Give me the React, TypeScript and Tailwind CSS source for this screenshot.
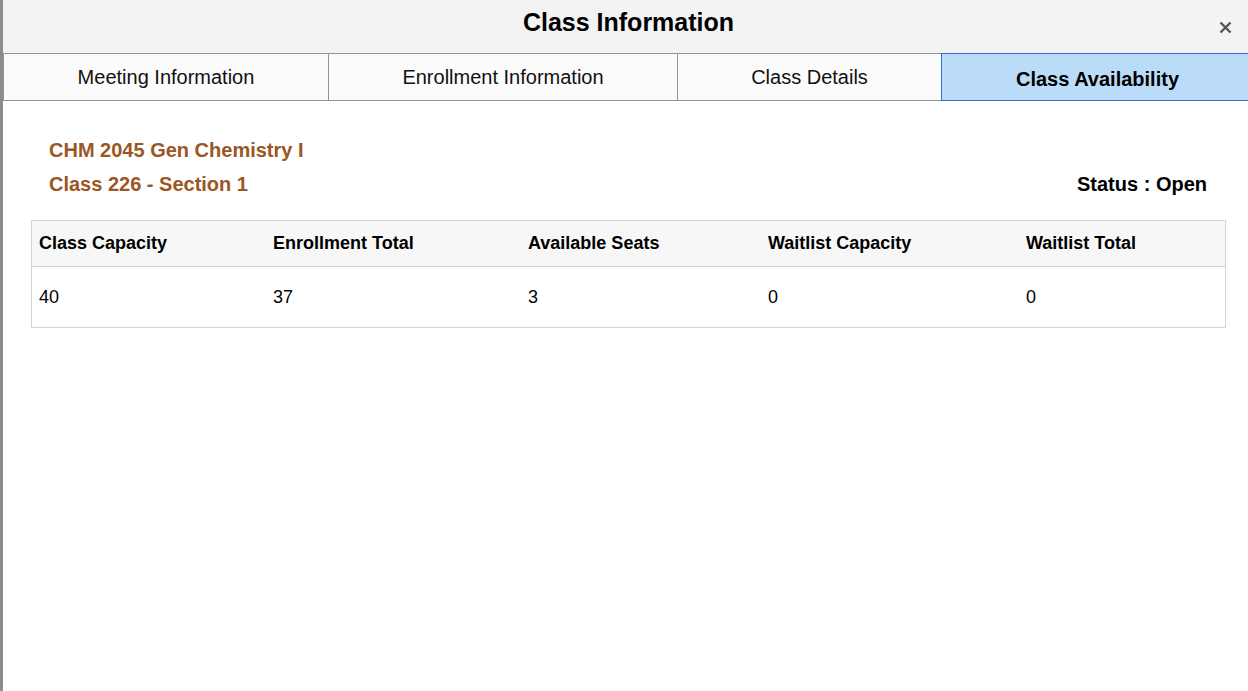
import React from "react";

const tabs = [
  { label: "Meeting Information", w: "w-[325px]" },
  { label: "Enrollment Information", w: "w-[349px]" },
  { label: "Class Details", w: "w-[264px]" },
];

const cols = [
  { h: "Class Capacity", v: "40" },
  { h: "Enrollment Total", v: "37" },
  { h: "Available Seats", v: "3" },
  { h: "Waitlist Capacity", v: "0" },
  { h: "Waitlist Total", v: "0" },
];

export default function App() {
  return (
    <div
      className="w-[1248px] h-[691px] flex bg-white overflow-hidden"
      style={{ fontFamily: '"Liberation Sans", Arial, sans-serif' }}
    >
      <div className="w-[3px] shrink-0 bg-[#8c8c8c]" />
      <div className="flex-1 flex flex-col">
        <div className="h-[53px] bg-[#f3f3f3] relative flex items-center justify-center">
          <h1 className="text-[25px] font-bold text-black mt-[-8px]">Class Information</h1>
          <button className="absolute right-[20px] top-[17px] w-[18px] h-[20px] flex items-center justify-center">
            <svg width="13" height="13" viewBox="0 0 13 13">
              <path d="M1.5 1.5 L11.5 11.5 M11.5 1.5 L1.5 11.5" stroke="#555" strokeWidth="2.4" />
            </svg>
          </button>
        </div>
        <div className="h-[48px] flex border-t border-b border-[#8a95a0] bg-[#fbfbfb]">
          {tabs.map((t) => (
            <div
              key={t.label}
              className={`${t.w} flex items-center justify-center text-[20px] text-[#111] border-l border-[#8a95a0]`}
            >
              {t.label}
            </div>
          ))}
          <div className="flex-1 -my-px border border-[#2c6fcf] bg-[#bbdcf9] flex items-center justify-center pt-[3px] text-[20px] font-bold text-black">
            Class Availability
          </div>
        </div>
        <div className="pt-[38px] px-[28px]">
          <div className="pl-[18px] pr-[19px]">
            <div className="text-[20px] font-bold text-[#9b5623] leading-[23px]">CHM 2045 Gen Chemistry I</div>
            <div className="flex justify-between mt-[11px] leading-[23px]">
              <div className="text-[20px] font-bold text-[#9b5623]">Class 226 - Section 1</div>
              <div className="text-[20px] font-bold text-black">Status : Open</div>
            </div>
          </div>
          <div className="mt-[24px] border border-[#d3d3db] w-[1195px]">
            <div className="grid grid-cols-[234px_255px_240px_258px_1fr] h-[46px] bg-[#f7f7f7] border-b border-[#d3d3db] items-center">
              {cols.map((c) => (
                <div key={c.h} className="px-[7px] text-[18px] font-bold text-black">{c.h}</div>
              ))}
            </div>
            <div className="grid grid-cols-[234px_255px_240px_258px_1fr] h-[60px] items-center">
              {cols.map((c) => (
                <div key={c.h} className="px-[7px] text-[18px] text-black">{c.v}</div>
              ))}
            </div>
          </div>
        </div>
      </div>
    </div>
  );
}
